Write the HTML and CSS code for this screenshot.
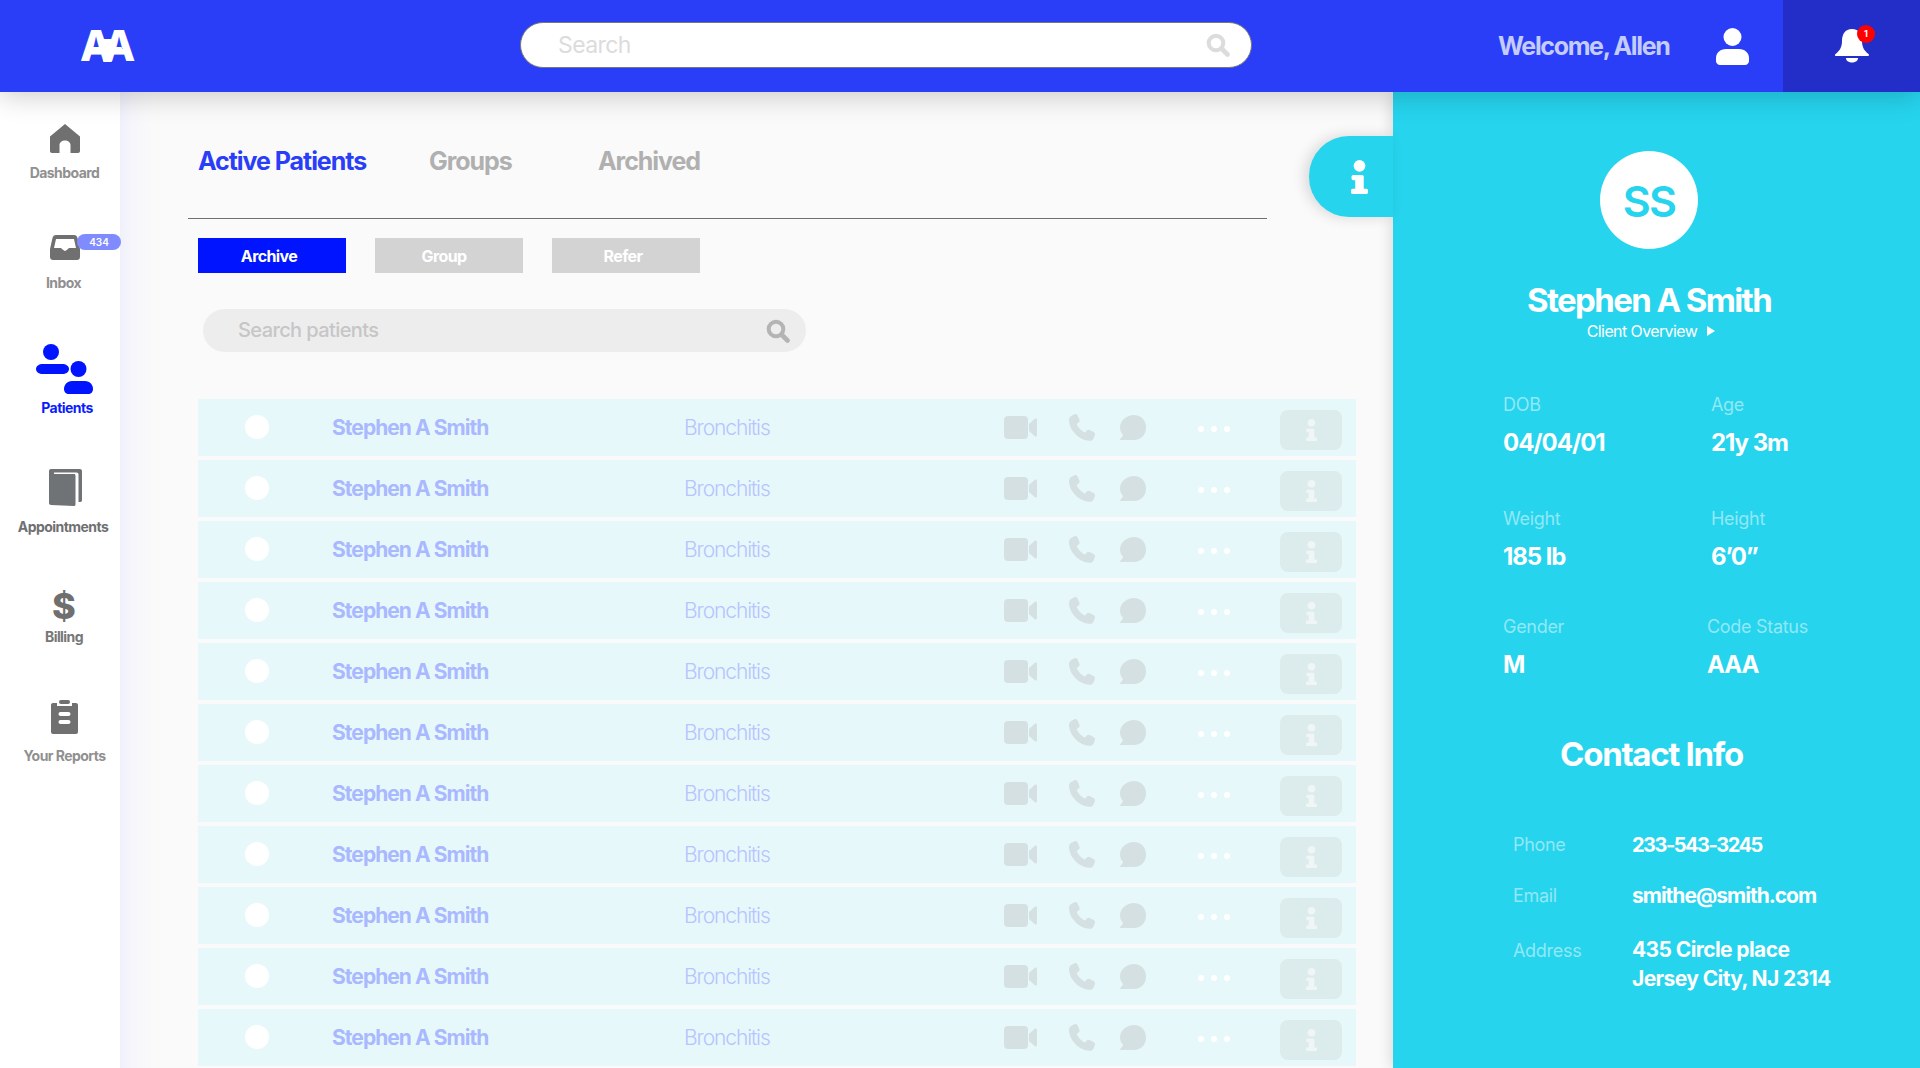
FILE: index.html
```html
<!DOCTYPE html>
<html lang="en">
<head>
<meta charset="utf-8">
<title>Patients</title>
<link rel="stylesheet" href="styles.css">
</head>
<body>
<svg class="defs" aria-hidden="true">
  <symbol id="i-search" viewBox="0 0 24 24"><circle cx="10" cy="10" r="7.3" fill="none" stroke="currentColor" stroke-width="4"/><path d="M15.5 15.5L21.5 21.5" fill="none" stroke="currentColor" stroke-width="4.6" stroke-linecap="round"/></symbol>
  <symbol id="i-video" viewBox="0 0 33 23"><rect x="0" y="0" width="24" height="23" rx="4" fill="currentColor"/><path d="M25 8L30.500 3C31.800 2 33 2.600 33 4V19C33 20.400 31.800 21 30.500 20L25 15Z" fill="currentColor"/></symbol>
  <symbol id="i-phone" viewBox="0 0 26 27"><path d="M5.5 0.3C7 -0.3 8 0.4 8.6 1.6L10.4 5.8C10.9 6.9 10.5 7.7 9.7 8.4L7.7 10C8.9 13.4 12.4 17 16 18.6L17.8 16.6C18.6 15.8 19.5 15.5 20.6 16L24.6 18.1C25.8 18.8 26.4 19.8 25.8 21.2L24.8 23.9C24.1 25.8 22.5 26.9 20.4 26.8C9.8 26 0.4 16.4 0 6.2C-0.1 4 1 2.3 3 1.4Z" fill="currentColor"/></symbol>
  <symbol id="i-chat" viewBox="0 0 26 25"><path d="M14 0C21 0 26 5 26 12.5S21 25 14 25H0.5C-0.2 25 -0.2 24.4 0.2 24C1.6 22.6 2.6 21.4 3 20C1 17.8 0 15.2 0 12.5C0 5 7 0 14 0Z" fill="currentColor"/></symbol>
  <symbol id="i-info" viewBox="0 0 16 32"><circle cx="8" cy="5.5" r="5.5" fill="currentColor"/><path d="M2 14H10.5C11.3 14 12 14.7 12 15.5V27H14.5C15.3 27 16 27.7 16 28.5V30.5C16 31.3 15.3 32 14.5 32H1.5C.7 32 0 31.3 0 30.5V28.5C0 27.7.7 27 1.5 27H4V19H2C1 19 .5 18.3 .5 17.5V15.5C.5 14.7 1.2 14 2 14Z" fill="currentColor"/></symbol>
  <symbol id="i-person" viewBox="0 0 33 37"><circle cx="16.5" cy="9" r="9" fill="currentColor"/><path d="M10 21H23C29 21 33 25 33 30V33C33 35.2 31.2 37 29 37H4C1.800 37 0 35.200 0 33V30C0 25 4 21 10 21Z" fill="currentColor"/></symbol>
</svg>

<header class="topbar">
  <div class="logo"><span class="logo-text">AA</span><span class="plus-h"></span><span class="plus-v"></span></div>
  <div class="top-search">
    <span class="top-search-text">Search</span>
    <svg class="top-search-icon"><use href="#i-search"/></svg>
  </div>
  <div class="welcome">Welcome, Allen</div>
  <svg class="top-user"><use href="#i-person"/></svg>
  <div class="bell-box">
    <svg class="bell" viewBox="0 0 34 34"><path d="M17 0C24 0 27 5.500 27 12C27 18 29 21.500 33.500 25C34.500 26 34 27 33 27H1C0 27 -.5 26 .5 25C5 21.500 7 18 7 12C7 5.500 10 0 17 0Z" fill="#fff"/><path d="M11 29H23C23 32 20 33.500 17 33.500S11 32 11 29Z" fill="#fff"/></svg>
    <span class="bell-badge">1</span>
  </div>
</header>

<div class="body">
  <nav class="side">
    <a class="nav nav-dash">
      <svg class="nav-icon ic-home" viewBox="0 0 30 29"><path d="M15 0L30 12.500V27C30 28.200 29.200 29 28 29H20.500V21C20.500 18.500 18 16.500 15 16.500S9.500 18.500 9.500 21V29H2C.8 29 0 28.200 0 27V12.500Z" fill="currentColor"/></svg>
      <span class="nav-label">Dashboard</span>
    </a>
    <a class="nav nav-inbox">
      <span class="inbox-wrap">
        <svg class="nav-icon ic-inbox" viewBox="0 0 30 25"><path d="M6 0H24C26 0 27 1 27.500 3L30 14V22C30 23.700 28.700 25 27 25H3C1.300 25 0 23.700 0 22V14L2.500 3C3 1 4 0 6 0Z" fill="currentColor"/><path d="M6 4H24L26 13H20C19 13 18.500 13.300 18 14L16 15.600C15.400 16.100 14.600 16.100 14 15.600L12 14C11.500 13.300 11 13 10 13H4Z" fill="#fff"/></svg>
        <span class="inbox-badge">434</span>
      </span>
      <span class="nav-label">Inbox</span>
    </a>
    <a class="nav nav-patients">
      <svg class="nav-icon ic-patients" viewBox="0 0 57 50"><circle cx="15" cy="8" r="8" fill="currentColor"/><path d="M7 20H26C30 20 33 22 33 25S30 30 26 30H7C3 30 0 28 0 25S3 20 7 20Z" fill="currentColor"/><circle cx="42.500" cy="25" r="8" fill="currentColor"/><path d="M36 37H49C54 37 57 41 57 45C57 48 55 50 52 50H33C30 50 28 48 28 45C28 41 31 37 36 37Z" fill="currentColor"/></svg>
      <span class="nav-label">Patients</span>
    </a>
    <a class="nav nav-appt">
      <svg class="nav-icon ic-appt" viewBox="0 0 33 37"><path d="M2 0H31C32.100 0 33 .9 33 2V31C33 32.100 32.300 33 31.500 33H29.500V5.500C29.500 4.300 28.700 3.500 27.500 3.500H5V5H25C25.800 5 26.500 5.700 26.500 6.500V35.500C26.500 36.300 25.800 37 25 37L2 36C.9 36 0 35.100 0 34V2C0 .9 .9 0 2 0Z" fill="#707375"/></svg>
      <span class="nav-label">Appointments</span>
    </a>
    <a class="nav nav-bill">
      <span class="dollar">$</span>
      <span class="nav-label">Billing</span>
    </a>
    <a class="nav nav-rep">
      <svg class="nav-icon ic-rep" viewBox="0 0 27 34"><path d="M2 3H6V6H21V3H25C26.100 3 27 3.900 27 5V32C27 33.100 26.100 34 25 34H2C.9 34 0 33.100 0 32V5C0 3.900 .9 3 2 3Z" fill="currentColor"/><rect x="8" y="0" width="11" height="4" rx="2" fill="currentColor"/><rect x="7.500" y="12" width="12" height="4" rx="2" fill="#fff"/><rect x="7.500" y="20" width="12" height="4" rx="2" fill="#fff"/></svg>
      <span class="nav-label">Your Reports</span>
    </a>
  </nav>

  <main class="main">
    <div class="tabs">
      <span class="tab tab-on">Active Patients</span>
      <span class="tab">Groups</span>
      <span class="tab">Archived</span>
    </div>
    <div class="rule"></div>
    <div class="actions">
      <button class="act act-on">Archive</button>
      <button class="act act-group">Group</button>
      <button class="act">Refer</button>
    </div>
    <div class="pt-search">
      <span>Search patients</span>
      <svg class="pt-search-icon"><use href="#i-search"/></svg>
    </div>
    <div class="rows">
      <div class="row"><span class="radio"></span><span class="pname">Stephen A Smith</span><span class="dx">Bronchitis</span><svg class="r-video"><use href="#i-video"/></svg><svg class="r-phone"><use href="#i-phone"/></svg><svg class="r-chat"><use href="#i-chat"/></svg><span class="dots"><i></i><i></i><i></i></span><span class="r-info"><svg class="r-info-i"><use href="#i-info"/></svg></span></div>
      <div class="row"><span class="radio"></span><span class="pname">Stephen A Smith</span><span class="dx">Bronchitis</span><svg class="r-video"><use href="#i-video"/></svg><svg class="r-phone"><use href="#i-phone"/></svg><svg class="r-chat"><use href="#i-chat"/></svg><span class="dots"><i></i><i></i><i></i></span><span class="r-info"><svg class="r-info-i"><use href="#i-info"/></svg></span></div>
      <div class="row"><span class="radio"></span><span class="pname">Stephen A Smith</span><span class="dx">Bronchitis</span><svg class="r-video"><use href="#i-video"/></svg><svg class="r-phone"><use href="#i-phone"/></svg><svg class="r-chat"><use href="#i-chat"/></svg><span class="dots"><i></i><i></i><i></i></span><span class="r-info"><svg class="r-info-i"><use href="#i-info"/></svg></span></div>
      <div class="row"><span class="radio"></span><span class="pname">Stephen A Smith</span><span class="dx">Bronchitis</span><svg class="r-video"><use href="#i-video"/></svg><svg class="r-phone"><use href="#i-phone"/></svg><svg class="r-chat"><use href="#i-chat"/></svg><span class="dots"><i></i><i></i><i></i></span><span class="r-info"><svg class="r-info-i"><use href="#i-info"/></svg></span></div>
      <div class="row"><span class="radio"></span><span class="pname">Stephen A Smith</span><span class="dx">Bronchitis</span><svg class="r-video"><use href="#i-video"/></svg><svg class="r-phone"><use href="#i-phone"/></svg><svg class="r-chat"><use href="#i-chat"/></svg><span class="dots"><i></i><i></i><i></i></span><span class="r-info"><svg class="r-info-i"><use href="#i-info"/></svg></span></div>
      <div class="row"><span class="radio"></span><span class="pname">Stephen A Smith</span><span class="dx">Bronchitis</span><svg class="r-video"><use href="#i-video"/></svg><svg class="r-phone"><use href="#i-phone"/></svg><svg class="r-chat"><use href="#i-chat"/></svg><span class="dots"><i></i><i></i><i></i></span><span class="r-info"><svg class="r-info-i"><use href="#i-info"/></svg></span></div>
      <div class="row"><span class="radio"></span><span class="pname">Stephen A Smith</span><span class="dx">Bronchitis</span><svg class="r-video"><use href="#i-video"/></svg><svg class="r-phone"><use href="#i-phone"/></svg><svg class="r-chat"><use href="#i-chat"/></svg><span class="dots"><i></i><i></i><i></i></span><span class="r-info"><svg class="r-info-i"><use href="#i-info"/></svg></span></div>
      <div class="row"><span class="radio"></span><span class="pname">Stephen A Smith</span><span class="dx">Bronchitis</span><svg class="r-video"><use href="#i-video"/></svg><svg class="r-phone"><use href="#i-phone"/></svg><svg class="r-chat"><use href="#i-chat"/></svg><span class="dots"><i></i><i></i><i></i></span><span class="r-info"><svg class="r-info-i"><use href="#i-info"/></svg></span></div>
      <div class="row"><span class="radio"></span><span class="pname">Stephen A Smith</span><span class="dx">Bronchitis</span><svg class="r-video"><use href="#i-video"/></svg><svg class="r-phone"><use href="#i-phone"/></svg><svg class="r-chat"><use href="#i-chat"/></svg><span class="dots"><i></i><i></i><i></i></span><span class="r-info"><svg class="r-info-i"><use href="#i-info"/></svg></span></div>
      <div class="row"><span class="radio"></span><span class="pname">Stephen A Smith</span><span class="dx">Bronchitis</span><svg class="r-video"><use href="#i-video"/></svg><svg class="r-phone"><use href="#i-phone"/></svg><svg class="r-chat"><use href="#i-chat"/></svg><span class="dots"><i></i><i></i><i></i></span><span class="r-info"><svg class="r-info-i"><use href="#i-info"/></svg></span></div>
      <div class="row"><span class="radio"></span><span class="pname">Stephen A Smith</span><span class="dx">Bronchitis</span><svg class="r-video"><use href="#i-video"/></svg><svg class="r-phone"><use href="#i-phone"/></svg><svg class="r-chat"><use href="#i-chat"/></svg><span class="dots"><i></i><i></i><i></i></span><span class="r-info"><svg class="r-info-i"><use href="#i-info"/></svg></span></div>
    </div>
  </main>

  <aside class="panel">
    <div class="info-tab"><svg class="info-tab-i"><use href="#i-info"/></svg></div>
    <div class="who">
      <div class="avatar">SS</div>
      <div class="who-name">Stephen A Smith</div>
      <div class="who-link">Client Overview <span class="tri"></span></div>
    </div>
    <div class="stats">
      <div class="stat"><div class="lab">DOB</div><div class="val">04/04/01</div></div>
      <div class="stat"><div class="lab">Age</div><div class="val">21y 3m</div></div>
    </div>
    <div class="stats stats-2">
      <div class="stat"><div class="lab">Weight</div><div class="val">185 lb</div></div>
      <div class="stat"><div class="lab">Height</div><div class="val">6’0”</div></div>
    </div>
    <div class="stats stats-3">
      <div class="stat"><div class="lab">Gender</div><div class="val">M</div></div>
      <div class="stat"><div class="lab">Code Status</div><div class="val">AAA</div></div>
    </div>
    <h2 class="contact-title">Contact Info</h2>
    <div class="contact">
      <div class="clab c1">Phone</div><div class="cval c1">233-543-3245</div>
      <div class="clab c2">Email</div><div class="cval c2">smithe@smith.com</div>
      <div class="clab c3">Address</div><div class="cval c3">435 Circle place<br>Jersey City, NJ 2314</div>
    </div>
  </aside>
</div>
</body>
</html>
```
FILE: styles.css
```css
* { box-sizing: border-box; }
html, body { margin: 0; height: 100%; }
body {
  width: 1920px; height: 1068px; overflow: hidden;
  font-family: Inter, "Liberation Sans", sans-serif;
  background: #fafafa;
  display: flex; flex-direction: column;
}
.defs { display: none; }

/* top bar */
.topbar {
  height: 92px; flex: none; background: #2a3ef8;
  display: flex; align-items: center; position: relative; z-index: 5;
  box-shadow: 0 4px 26px rgba(0,0,0,.2);
}
.logo { position: relative; width: 54px; height: 36px; margin-left: 80px; color: #fff; }
.logo-text { font-size: 42px; font-weight: 800; line-height: 36px; letter-spacing: -10px; display: block; }
.plus-h { position: absolute; left: 11px; width: 31px; top: 19px; height: 7px; background: #fff; border-radius: 1px; }
.plus-v { position: absolute; left: 23px; width: 9px; top: 11px; height: 23px; background: #fff; border-radius: 1px; }
.top-search {
  width: 732px; height: 46px; margin: -3px 0 0 386px; background: #fff; border: 1px solid #777;
  border-radius: 23px; display: flex; align-items: center; justify-content: space-between;
  padding: 0 21px 0 37px;
}
.top-search-text { color: #dcdcdc; font-size: 23px; letter-spacing: -.6px; }
.top-search-icon { width: 24px; height: 24px; color: #dcdcdc; }
.welcome { margin-left: 246px; width: 218px; color: #c4ccfd; font-size: 25px; font-weight: 700; letter-spacing: -1.35px; }
.top-user { width: 33px; height: 37px; color: #fff; }
.bell-box {
  margin-left: 34px; width: 137px; height: 92px; background: #232ec9; position: relative;
  display: flex;
}
.bell { width: 34px; height: 34px; margin: 29px 0 0 52px; }
.bell-badge {
  position: absolute; left: 74px; top: 25px; width: 18px; height: 18px; border-radius: 50%;
  background: #ff0000; color: #fff; font-size: 9px; font-weight: 700; text-align: center; line-height: 18px;
}

/* body */
.body { flex: 1; display: flex; min-height: 0; }

/* sidebar */
.side { width: 120px; flex: none; background: #fff; display: flex; flex-direction: column; position: relative; z-index: 2; }
.nav { display: flex; flex-direction: column; align-items: center; color: #707070; }
.nav-label { font-size: 14px; font-weight: 700; letter-spacing: -.55px; line-height: 18px; white-space: nowrap; color: #909090; }
.nav-icon { display: block; }
.nav-dash { padding: 32px 0 0 9px; }
.ic-home { width: 30px; height: 29px; }
.nav-dash .nav-label { margin-top: 11px; }
.nav-inbox { margin-top: 52px; padding-left: 7px; }
.inbox-wrap { position: relative; display: block; width: 30px; height: 25px; margin-left: 3px; top: 1px; }
.ic-inbox { width: 30px; height: 25px; }
.inbox-badge {
  position: absolute; left: 27px; top: -1px; width: 44px; height: 16px; border-radius: 8px;
  background: #7f8bff; color: #fff; font-size: 10px; font-weight: 600; line-height: 16px; text-align: center;
}
.nav-inbox .nav-label { margin-top: 15px; }
.nav-patients { margin-top: 52px; color: #0014ff; padding-left: 14px; }
.ic-patients { width: 57px; height: 50px; margin-right: 6px; }
.nav-patients .nav-label { color: #0a1cff; margin-top: 5px; }
.nav-appt { margin-top: 52px; padding-left: 6px; }
.ic-appt { width: 33px; height: 37px; margin-left: 5px; }
.nav-appt .nav-label { color: #6f7072; margin-top: 12px; }
.nav-bill { margin-top: 52px; padding-left: 8px; }
.dollar { font-size: 36px; font-weight: 800; line-height: 38px; color: #6f6f6f; height: 38px; margin-top: -1px; }
.nav-bill .nav-label { color: #777; margin-top: 3px; }
.nav-rep { margin-top: 52px; padding-left: 9px; }
.ic-rep { width: 27px; height: 34px; margin-top: 2px; }
.nav-rep .nav-label { margin-top: 13px; }

/* main */
.main {
  width: 1273px; flex: none; padding: 0 0 0 78px; overflow: hidden;
  background: linear-gradient(90deg, #eff0fb 0, #f7f7fb 14px, #fafafa 34px);
}
.tabs { display: grid; grid-template-columns: 231px 169px auto; margin-top: 55px; height: 28px; line-height: 28px; }
.tab { font-size: 25px; font-weight: 700; letter-spacing: -1.05px; color: #b0b0b0; }
.tab-on { color: #2a3ef8; }
.rule { height: 1px; width: 1079px; background: #707070; margin: 43px 0 0 -10px; }
.actions { display: flex; gap: 29px; margin-top: 19px; }
.act {
  width: 148px; height: 35px; border: 0; padding: 2px 0 0 0; background: #d3d3d3; color: #fff;
  font: 700 16px/33px Inter, sans-serif; letter-spacing: -.6px; text-indent: -6px;
}
.act-group { text-indent: -10px; }
.act-on { background: #0014ff; }
.pt-search {
  width: 603px; height: 43px; margin: 36px 0 0 5px; background: #ededed; border-radius: 22px;
  display: flex; align-items: center; justify-content: space-between; padding: 0 16px 0 35px;
  font-size: 20px; color: #c6c6c6; letter-spacing: -.5px; font-weight: 500;
}
.pt-search span { margin-top: -1px; letter-spacing: -.6px; }
.pt-search-icon { width: 24px; height: 24px; color: #b4b4b4; }
.rows { margin-top: 47px; display: flex; flex-direction: column; gap: 4px; }
.row {
  height: 57px; width: 1158px; flex: none; background: #e7f8fb; padding-left: 47px;
  display: grid; grid-template-columns: 87px 352px 320px 65px 51px 78px 82px 62px; align-items: center;
}
.radio { width: 24px; height: 24px; border-radius: 50%; background: #fff; margin-top: -2px; }
.pname { font-size: 21px; font-weight: 700; letter-spacing: -.95px; color: #a9b8ff; }
.dx { font-size: 21px; font-weight: 300; letter-spacing: -1.1px; color: #b6c4ff; }
.r-video { width: 33px; height: 23px; color: #d5e0e3; margin-top: -1px; }
.r-phone { width: 26px; height: 27px; color: #d5e0e3; margin-top: -1px; }
.r-chat { width: 26px; height: 25px; color: #d5e0e3; margin-top: -1px; }
.dots { display: flex; gap: 7px; margin-top: 3px; }
.dots i { width: 6px; height: 6px; border-radius: 50%; background: #fff; }
.r-info {
  width: 62px; height: 40px; background: #dcecec; border-radius: 8px; display: flex;
  align-items: center; justify-content: center; margin-top: 4px;
}
.r-info-i { width: 11px; height: 24px; color: #f0f5f5; }

/* panel */
.panel { flex: 1; background: #26d4ee; position: relative; color: #fff; box-shadow: -3px 0 12px rgba(0,0,0,.12); z-index: 3; }
.info-tab {
  position: absolute; left: -84px; top: 44px; width: 84px; height: 81px; background: #26d4ee;
  border-radius: 40px 0 0 40px; display: flex; align-items: center; justify-content: center;
  box-shadow: -4px 0 14px rgba(0,0,0,.14);
}
.info-tab-i { width: 17px; height: 38px; color: #fff; margin-left: 16px; }
.who { width: 512px; display: flex; flex-direction: column; align-items: center; padding-top: 59px; }
.avatar {
  width: 98px; height: 98px; border-radius: 50%; background: #fff; color: #26d4ee;
  font-size: 43px; font-weight: 600; letter-spacing: -1.7px; line-height: 100px; text-align: center;
}
.who-name { font-size: 33px; font-weight: 700; letter-spacing: -1.6px; line-height: 40px; margin-top: 31px; }
.who-link { font-size: 16px; line-height: 20px; letter-spacing: -.6px; margin-top: 1px; display: flex; align-items: center; padding-left: 4px; }
.tri { width: 0; height: 0; margin-left: 10px; border-left: 8px solid #fff; border-top: 5px solid transparent; border-bottom: 5px solid transparent; }
.stats { display: grid; grid-template-columns: 208px auto; padding-left: 110px; margin-top: 54px; }
.stats-2 { margin-top: 51px; }
.stats-3 { margin-top: 45px; grid-template-columns: 204px auto; }
.lab { font-size: 18px; line-height: 20px; letter-spacing: -.3px; color: #92e8f5; }
.val { font-size: 24px; font-weight: 700; line-height: 30px; margin-top: 13px; letter-spacing: -1.05px; }
.contact-title { margin: 54px 0 0 -10px; text-align: center; font-size: 33px; font-weight: 700; letter-spacing: -1.3px; line-height: 40px; }
.contact { display: grid; grid-template-columns: 119px auto; padding-left: 120px; margin-top: 59px; align-items: start; }
.clab { font-size: 18px; line-height: 24px; letter-spacing: -.3px; color: #92e8f5; }
.cval { font-size: 20px; font-weight: 700; line-height: 29px; letter-spacing: -.7px; margin-top: -2px; }
.cval.c1 { letter-spacing: -1.5px; }
.clab.c2 { margin-top: 24px; }
.cval.c2 { margin-top: 21px; font-size: 21px; letter-spacing: -1px; }
.clab.c3 { margin-top: 29px; }
.cval.c3 { margin-top: 25px; font-size: 21px; letter-spacing: -.6px; }
```
